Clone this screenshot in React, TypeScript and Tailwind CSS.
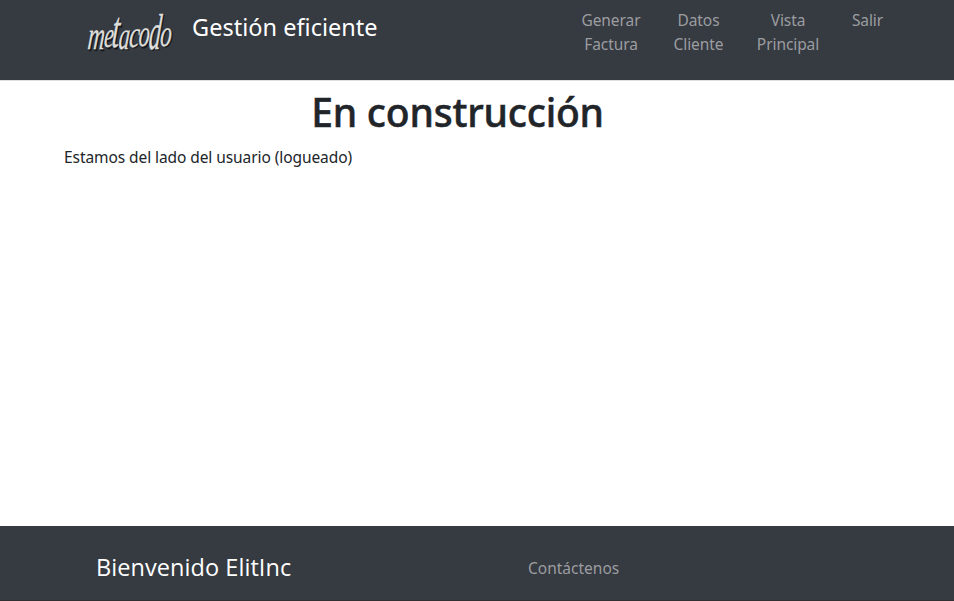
const letters = [
  { char: "m", x: 2, y: 41, width: 17, scale: 2.2 },
  { char: "e", x: 18.5, y: 39, width: 9.5, scale: 2 },
  { char: "t", x: 26, y: 39, width: 7.5, scale: 2.9 },
  { char: "a", x: 33, y: 40.5, width: 11, scale: 2.2 },
  { char: "c", x: 43.5, y: 38.5, width: 10.5, scale: 2.1 },
  { char: "o", x: 53, y: 38, width: 11, scale: 2.1 },
  { char: "d", x: 63, y: 40.5, width: 12, scale: 2.8 },
  { char: "o", x: 74.5, y: 37.5, width: 11.5, scale: 2.1 },
];

function Lettering({ dx, dy, color }: { dx: number; dy: number; color: string }) {
  return (
    <g fontFamily="'Liberation Serif', serif" fontStyle="italic" fontSize="18" fill={color} stroke={color} strokeWidth="0.15">
      {letters.map((l) => (
        <text key={l.x} transform={`translate(${l.x + dx} ${l.y + dy}) skewX(-5) scale(1 ${l.scale})`} textLength={l.width} lengthAdjust="spacingAndGlyphs">
          {l.char}
        </text>
      ))}
    </g>
  );
}

function Logo() {
  return (
    <svg className="block h-12 w-[90px] shrink-0 overflow-visible" viewBox="0 0 90 48">
      <Lettering dx={1.3} dy={1.5} color="#17191c" />
      <Lettering dx={0} dy={0} color="#dededb" />
    </svg>
  );
}

const links = [
  { lines: ["Generar", "Factura"], box: "w-[59px] mr-8" },
  { lines: ["Datos", "Cliente"], box: "w-[52px] mr-8" },
  { lines: ["Vista", "Principal"], box: "w-[63px] mr-8" },
  { lines: ["Salir"], box: "w-8" },
];

export default function App() {
  return (
    <div className="flex h-[601px] w-full flex-col overflow-hidden bg-white font-['Noto_Sans',sans-serif] text-base leading-6 text-[#212529]">
      <header className="flex h-20 shrink-0 items-start bg-[#363a41] pl-[85px] shadow-[0_1px_0_#dedfe0]">
        <div className="flex pt-2">
          <Logo />
          <span className="ml-[17px] mt-1 whitespace-nowrap text-[23.5px] leading-[30px] tracking-[0.02px] text-white">Gestión eficiente</span>
        </div>
        <nav className="ml-auto mr-[70.5px] flex pt-2 text-center text-[15.5px] tracking-[-0.08px] text-[#9b9da0]">
          {links.map((link) => (
            <a key={link.lines[0]} className={`flex flex-col items-center whitespace-nowrap ${link.box}`}>
              {link.lines.map((line) => (
                <span key={line}>{line}</span>
              ))}
            </a>
          ))}
        </nav>
      </header>
      <main className="flex-1 px-16 pt-2">
        <h1 className="mr-[39px] whitespace-nowrap text-center text-[39px] font-medium leading-[48px] tracking-[-0.2px] [-webkit-text-stroke:0.5px_#212529]">En construcción</h1>
        <p className="mt-[9px] whitespace-nowrap text-[15.5px] tracking-[-0.08px]">Estamos del lado del usuario (logueado)</p>
      </main>
      <footer className="flex h-[75px] shrink-0 items-center border-b border-[#302f32] bg-[#363a41] pl-24 pt-2">
        <h2 className="w-[432px] whitespace-nowrap font-['Open_Sans',sans-serif] text-[23.5px] leading-[30px] tracking-[0.06px] text-white">Bienvenido ElitInc</h2>
        <a className="mt-0.5 text-[15.5px] text-[#9b9da0]">Contáctenos</a>
      </footer>
    </div>
  );
}
